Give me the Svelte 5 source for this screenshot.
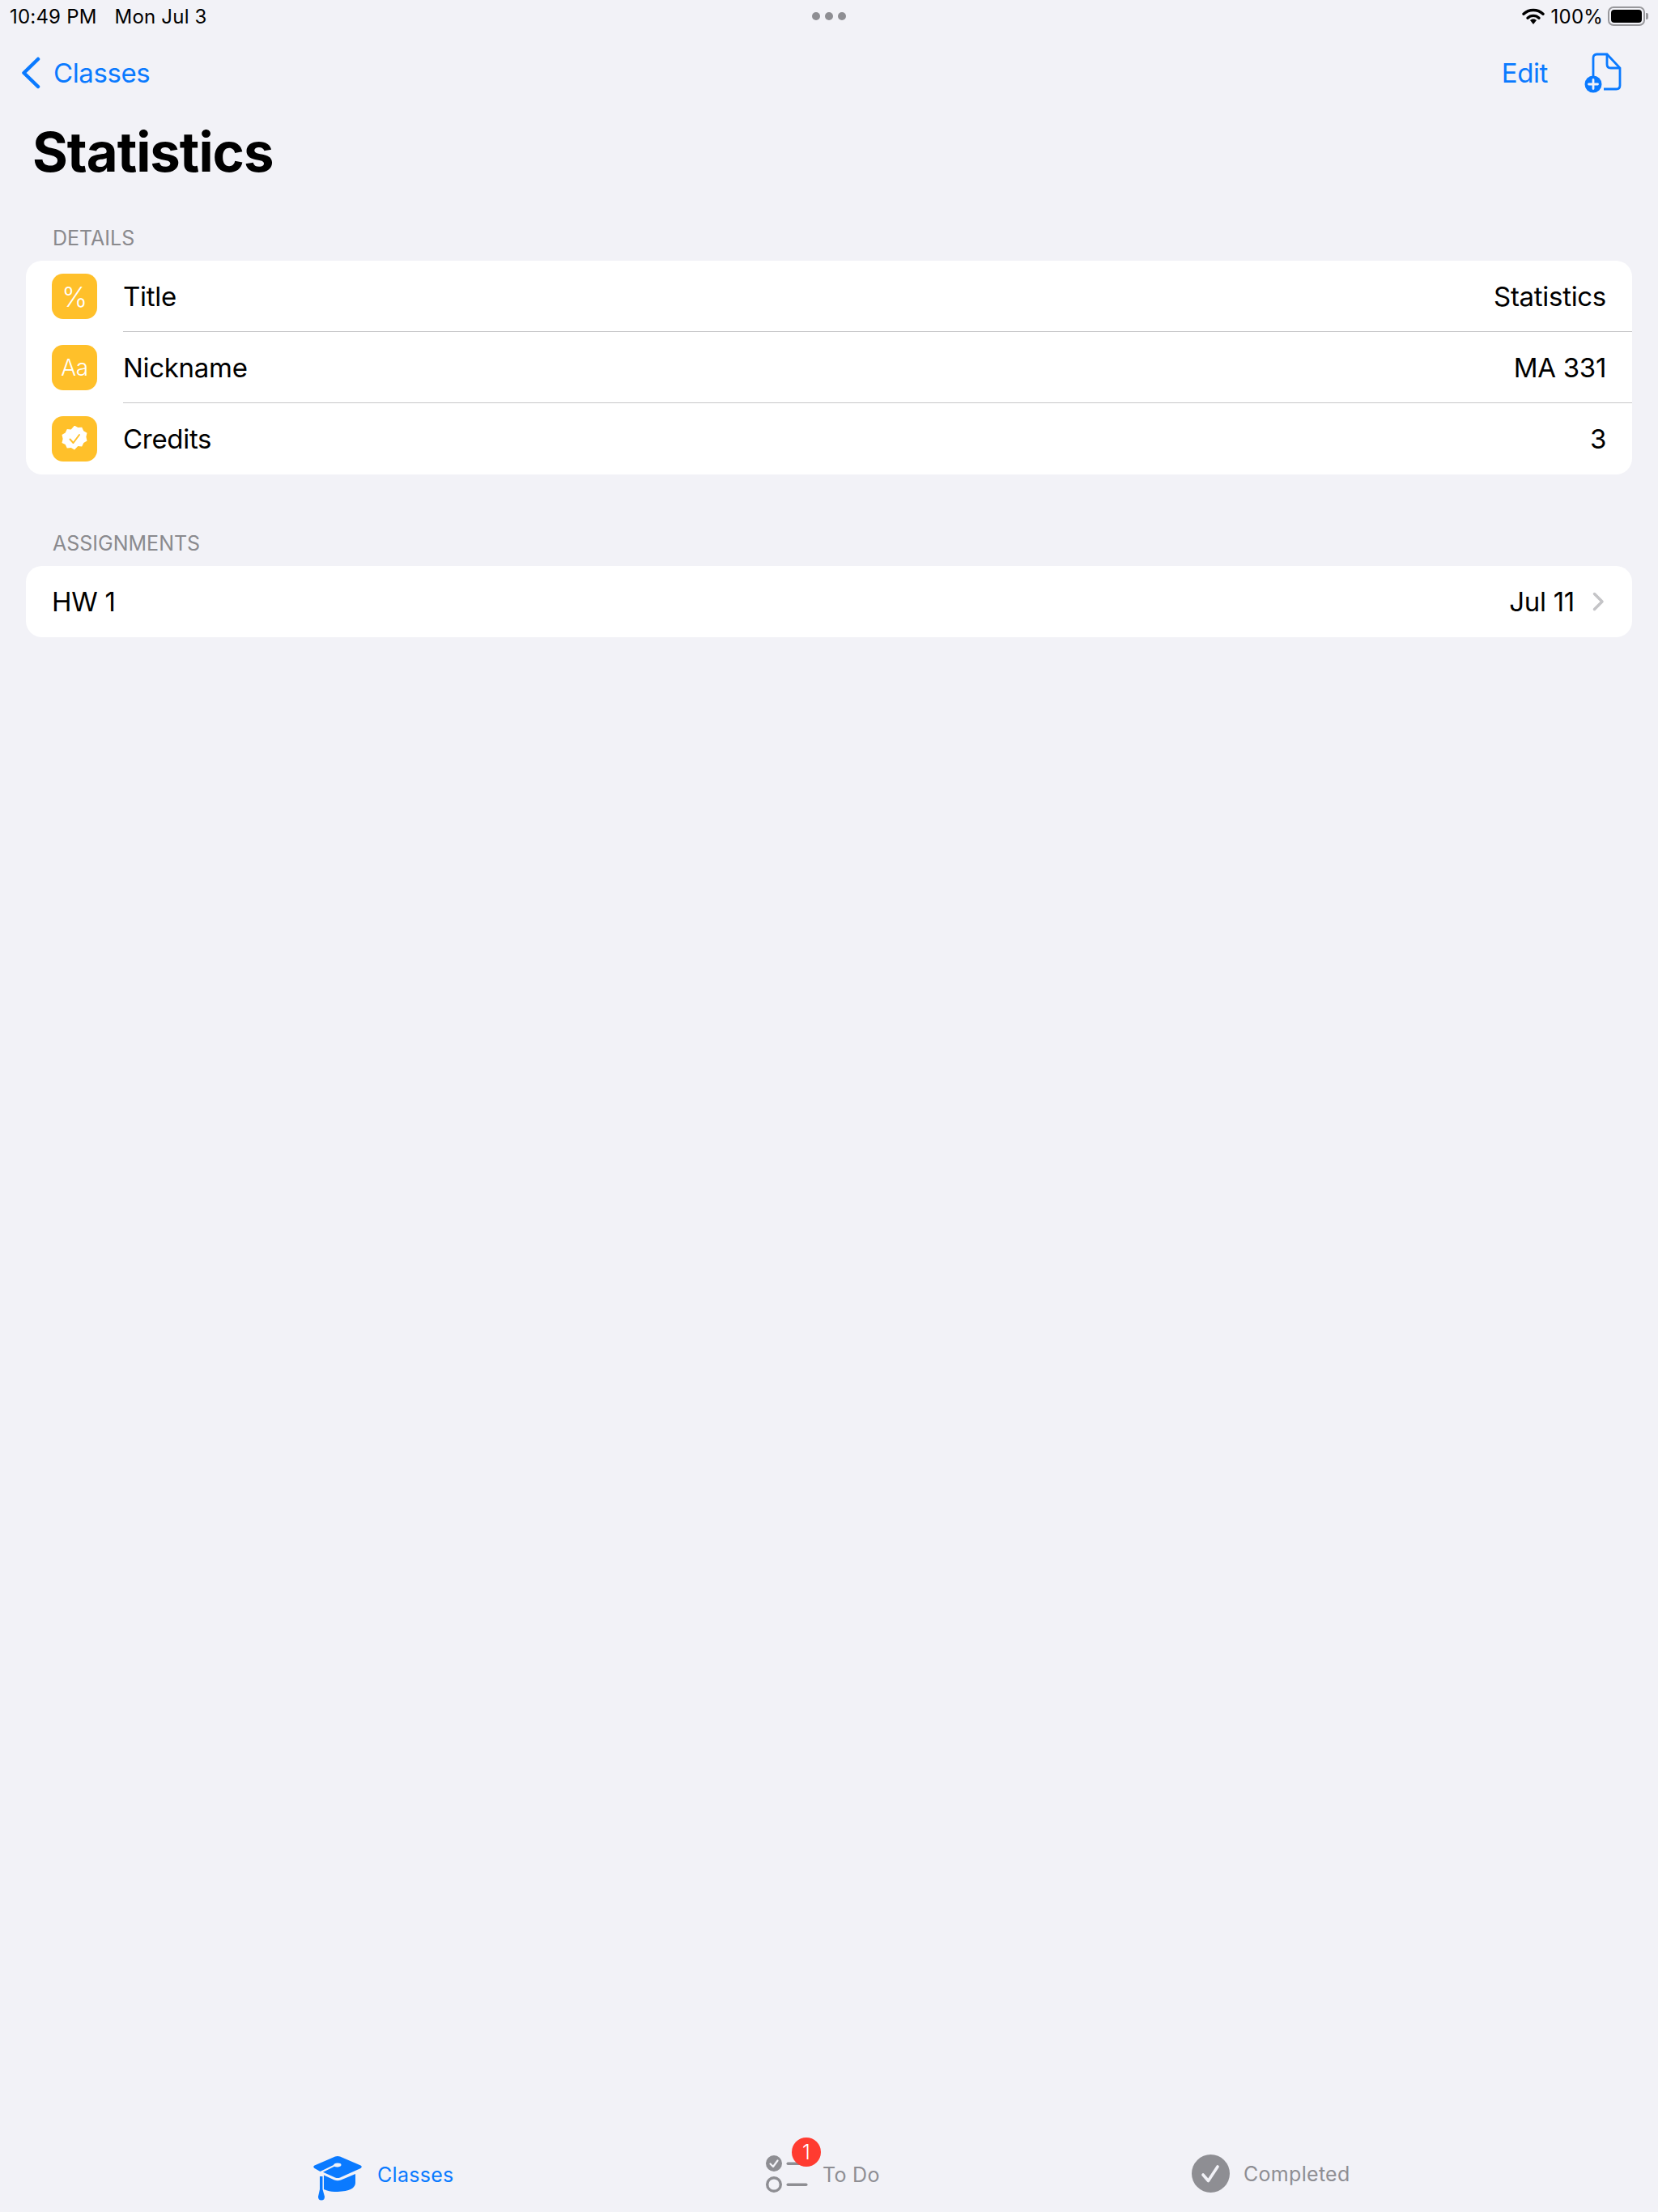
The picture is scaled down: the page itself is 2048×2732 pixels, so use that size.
<script>
  const details = [
    { label: 'Title', value: 'Statistics', glyph: '%' },
    { label: 'Nickname', value: 'MA 331', glyph: 'Aa' },
    { label: 'Credits', value: '3', glyph: '' }
  ];
</script>

<div class="page">
  <div class="status">
    <span class="time">10:49 PM</span>
    <span class="date">Mon Jul 3</span>
    <div class="dots"><i></i><i></i><i></i></div>
    <div class="status-right">
      <svg class="wifi" width="28" height="21" viewBox="0 0 28 21">
        <path d="M2 7.300C5.100 4.300 9.300 2.500 14 2.500s8.900 1.800 12 4.800" fill="none" stroke="#000" stroke-width="3.400" stroke-linecap="round" />
        <path d="M7 12.300C8.800 10.500 11.300 9.400 14 9.400s5.200 1.100 7 2.900" fill="none" stroke="#000" stroke-width="3.400" stroke-linecap="round" />
        <path d="M14 13.500c-1.600 0-3 .6-4 1.600L14 20l4-4.900c-1-1-2.400-1.600-4-1.600z" />
      </svg>
      <span class="pct">100%</span>
      <div class="battery"><div class="fill"></div></div>
      <div class="nub"></div>
    </div>
  </div>

  <div class="nav">
    <div class="back">
      <svg width="24" height="40" viewBox="0 0 24 40">
        <path d="M21 3 L3.500 20 L21 37" fill="none" stroke="#0a7aff" stroke-width="4.500" stroke-linecap="round" stroke-linejoin="round" />
      </svg>
      <span>Classes</span>
    </div>
    <div class="actions">
      <span>Edit</span>
      <svg class="doc" width="46" height="50" viewBox="0 0 46 50">
        <path d="M11 29V6.500Q11 2 15.500 2H28L44 19V40.500Q44 45 39.500 45H24" fill="none" stroke="#0a7aff" stroke-width="2.800" />
        <path d="M28 2V14.500Q28 19 32.500 19H44" fill="none" stroke="#0a7aff" stroke-width="2.800" />
        <circle cx="11" cy="39" r="10.500" fill="#0a7aff" />
        <path d="M11 33.500V44.500M5.500 39H16.500" stroke="#f2f2f7" stroke-width="2.800" stroke-linecap="round" />
      </svg>
    </div>
  </div>

  <h1>Statistics</h1>

  <div class="section-label first">DETAILS</div>
  <div class="card">
    {#each details as row}
      <div class="row">
        <div class="tile">
          {#if row.glyph === ''}
            <svg width="32" height="32" viewBox="0 0 32 32">
              <path fill="#fff" d="M16 1l4.300 2.500 4.900-.4 2.100 4.500 4.200 2.500-1.100 4.900 1.100 4.900-4.200 2.500-2.100 4.500-4.900-.4L16 31l-4.300-2.500-4.900.4-2.100-4.500L.5 22.300l1.100-4.900-1.100-4.900 4.200-2.500 2.100-4.500 4.900.4z" transform="translate(0 -1.400)" />
              <path d="M10.500 16.500l4 4.500 7.500-10" fill="none" stroke="#ffc02a" stroke-width="2" stroke-linecap="round" stroke-linejoin="round" />
            </svg>
          {:else}
            <span class:pct-glyph={row.glyph === '%'}>{row.glyph}</span>
          {/if}
        </div>
        <div class="row-body">
          <span>{row.label}</span>
          <span>{row.value}</span>
        </div>
      </div>
    {/each}
  </div>

  <div class="section-label">ASSIGNMENTS</div>
  <div class="card">
    <div class="row plain">
      <span>HW 1</span>
      <div class="due">
        <span>Jul 11</span>
        <svg width="15" height="24" viewBox="0 0 15 24">
          <path d="M2.500 2.500 L12 12 L2.500 21.500" fill="none" stroke="#c4c4c7" stroke-width="3.500" stroke-linecap="round" stroke-linejoin="round" />
        </svg>
      </div>
    </div>
  </div>

  <div class="tabs">
    <div class="tab active classes">
      <svg width="64" height="56" viewBox="0 0 64 56">
        <path fill="#0a7aff" d="M29 1.500Q32 .5 35 1.500L60.500 12.500Q63 14 60.500 16L35 27.500Q32 28.700 29 27.500L14 20.800 28 13.800Q30 14.800 32.500 14.500 36.500 14 36.500 11.800 36.500 9.500 32 9.500 27.500 9.500 27 12L10.500 20 3.500 16Q1 14 3.500 12.500z" />
        <path fill="#0a7aff" d="M15 24.500L28 30.500Q32 32 36 30.500L54 23V34Q54 44 32 45 24 45 19 43.500L15 42z" />
        <path fill="#0a7aff" d="M10 26H13.500V42L16 51Q16 55.500 12 55.500 8 55.500 8 51L10 42z" />
      </svg>
      <span>Classes</span>
    </div>
    <div class="tab todo">
      <div class="todo-icon">
        <svg width="52" height="48" viewBox="0 0 52 48">
          <circle cx="10" cy="10" r="10" fill="#8e8e93" />
          <path d="M5.500 10.500L9 14 14.500 6.500" fill="none" stroke="#f2f2f7" stroke-width="2.200" stroke-linecap="round" stroke-linejoin="round" />
          <rect x="25.500" y="8.500" width="26" height="3.500" rx="1.750" fill="#8e8e93" />
          <circle cx="10" cy="36" r="8.300" fill="none" stroke="#8e8e93" stroke-width="3.400" />
          <rect x="25.500" y="34.500" width="26" height="3.500" rx="1.750" fill="#8e8e93" />
        </svg>
        <div class="badge">1</div>
      </div>
      <span>To Do</span>
    </div>
    <div class="tab done">
      <svg width="47" height="47" viewBox="0 0 47 47">
        <circle cx="23.500" cy="23.500" r="23.500" fill="#8e8e93" />
        <path d="M14 25L20.500 32.500 32 15" fill="none" stroke="#f2f2f7" stroke-width="3.600" stroke-linecap="round" stroke-linejoin="round" />
      </svg>
      <span>Completed</span>
    </div>
  </div>
</div>

<style>
  :global(body) { margin: 0; background: #f2f2f7; }
  .page {
    width: 2048px; height: 2732px; display: flex; flex-direction: column;
    font-family: Inter, "Liberation Sans", sans-serif; color: #000; box-sizing: border-box;
  }
  .status {
    height: 40px; display: flex; align-items: center; padding: 0 12px;
    font-size: 24px; letter-spacing: 0.2px; position: relative;
  }
  .date { margin-left: 22px; }
  .dots {
    position: absolute; left: 1003px; top: 15px; display: flex; gap: 6px;
  }
  .dots i { width: 10px; height: 10px; border-radius: 50%; background: #8e8e93; }
  .status-right { margin-left: auto; display: flex; align-items: center; }
  .wifi { fill: #000; margin-right: 8px; }
  .battery {
    width: 46px; height: 24px; box-sizing: border-box; border: 2px solid #98989c;
    border-radius: 7px; padding: 2px; margin-left: 6px;
  }
  .fill { height: 100%; background: #000; border-radius: 4px; }
  .nub { width: 3px; height: 8px; background: #98989c; border-radius: 0 2px 2px 0; margin-left: 1px; }
  .nav {
    height: 100px; display: flex; align-items: center; justify-content: space-between;
    color: #0a7aff; font-size: 33px; letter-spacing: -0.4px; padding: 0 45px 0 26px; box-sizing: border-box;
  }
  .back { display: flex; align-items: center; gap: 16px; }
  .actions { display: flex; align-items: center; gap: 45px; }
  h1 {
    margin: 0; font-size: 67px; font-weight: 700; line-height: 96px;
    padding-left: 40px; letter-spacing: -1px;
  }
  .section-label {
    color: #8a8a8e; font-size: 25px; padding-left: 65px; line-height: 30px; margin: 70px 0 13px;
  }
  .section-label.first { margin-top: 43px; }
  .card {
    margin: 0 32px; background: #fff; border-radius: 20px; overflow: hidden;
  }
  .row {
    height: 88px; display: flex; align-items: center; padding-left: 32px;
    font-size: 33px; letter-spacing: -0.3px;
  }
  .tile {
    width: 56px; height: 56px; border-radius: 14px; background: #ffc02a; color: #fff;
    display: flex; align-items: center; justify-content: center; font-size: 28px; font-weight: 300; flex-shrink: 0;
  }
  .pct-glyph { font-size: 34px; }
  .row-body {
    flex: 1; height: 100%; margin-left: 32px; padding-right: 32px;
    display: flex; align-items: center; justify-content: space-between;
    border-bottom: 1px solid #c6c6c8; box-sizing: border-box;
  }
  .row:last-child .row-body { border-bottom: none; }
  .plain { justify-content: space-between; padding-right: 34px; }
  .due { display: flex; align-items: center; gap: 22px; }
  .tabs {
    margin-top: auto; height: 112px; position: relative;
    font-size: 25px; color: #8e8e93;
  }
  .tab { position: absolute; display: flex; align-items: center; }
  .tab span { letter-spacing: 0.3px; }
  .active { color: #0a7aff; }
  .classes { left: 385px; top: 42px; gap: 17px; }
  .classes span { margin-top: -9px; }
  .todo { left: 946px; top: 42px; }
  .todo-icon { position: relative; width: 52px; height: 48px; margin-right: 18px; }
  .badge {
    position: absolute; left: 32px; top: -22px; width: 36px; height: 36px; border-radius: 50%;
    background: #ff3b30; color: #fff; font-size: 25px; font-weight: 300; text-align: center; line-height: 36px;
  }
  .done { left: 1472px; top: 41px; gap: 17px; }
</style>
